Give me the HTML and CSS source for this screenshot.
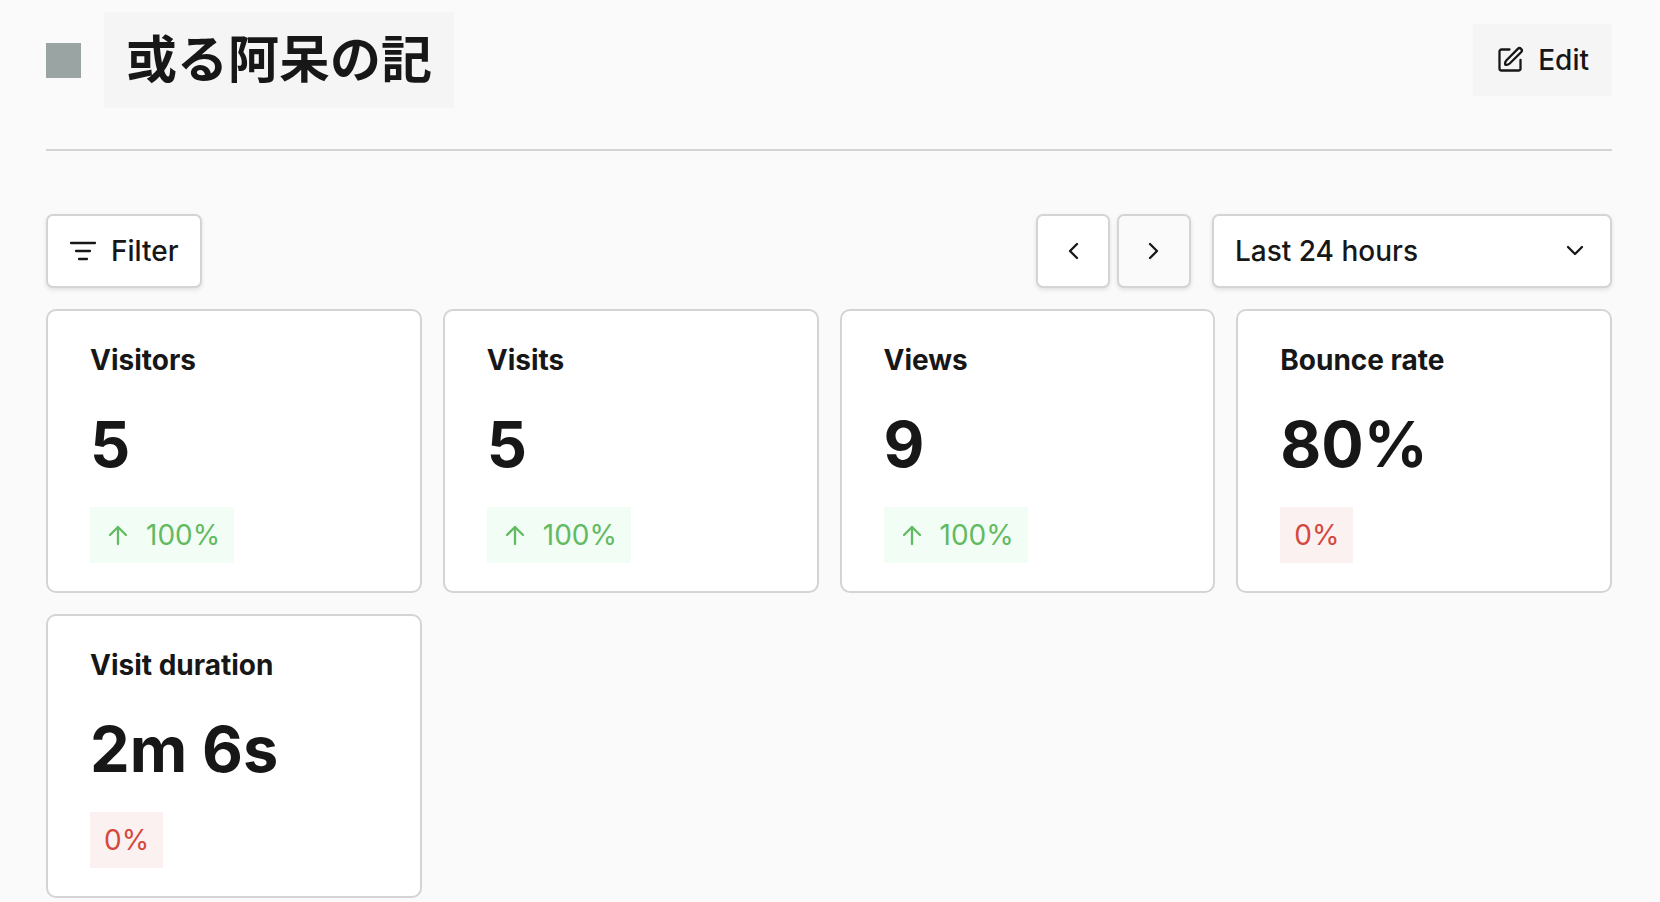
FILE: index.html
```html
<!DOCTYPE html>
<html lang="en">
<head>
  <meta charset="UTF-8" />
  <meta name="viewport" content="width=device-width, initial-scale=1.0"/>
  <title>或る阿呆の記</title>
  <link rel="stylesheet" href="styles.css">
</head>
<body>
  <header class="page-header">
    <span class="site-icon"></span>
    <h1 class="site-name" lang="ja">或る阿呆の記</h1>
    <button type="button" class="edit-btn">
      <svg class="icon" viewBox="0 0 28 28" aria-hidden="true">
        <path d="M13.500 3.500h-8a2 2 0 0 0-2 2v17a2 2 0 0 0 2 2h17a2 2 0 0 0 2-2V14"/>
        <path d="M9.300 18.700c-.5-1.300.2-3.300 1.200-4.400L21.800 2.900a2.300 2.300 0 0 1 3.300 3.300L13.700 17.500c-1.100 1-3.100 1.700-4.400 1.200z"/>
      </svg>
      Edit
    </button>
  </header>

  <main>
    <div class="toolbar">
      <button type="button" class="btn filter-btn">
        <svg class="icon" viewBox="0 0 28 28" aria-hidden="true">
          <path d="M2 6h24M7 14h14M10 22h8"/>
        </svg>
        Filter
      </button>
      <div class="date-controls">
        <div class="date-nav">
          <button type="button" class="btn nav-btn" aria-label="Previous">
            <svg class="icon" viewBox="0 0 28 28" aria-hidden="true"><path d="M18 7l-7 7 7 7"/></svg>
          </button>
          <button type="button" class="btn nav-btn" aria-label="Next" disabled>
            <svg class="icon" viewBox="0 0 28 28" aria-hidden="true"><path d="M10 7l7 7-7 7"/></svg>
          </button>
        </div>
        <div class="date-select">
          <select class="btn" aria-label="Date range">
            <option>Last 24 hours</option>
          </select>
          <svg class="icon" viewBox="0 0 28 28" aria-hidden="true"><path d="M7 10l7 7 7-7"/></svg>
        </div>
      </div>
    </div>

    <div class="metrics">
      <section class="card">
        <h2 class="label">Visitors</h2>
        <div class="value">5</div>
        <div class="change up">
          <svg class="icon" viewBox="0 0 28 28" aria-hidden="true"><path d="M14 23V6M6 14l8-8 8 8"/></svg>
          100%
        </div>
      </section>
      <section class="card">
        <h2 class="label">Visits</h2>
        <div class="value">5</div>
        <div class="change up">
          <svg class="icon" viewBox="0 0 28 28" aria-hidden="true"><path d="M14 23V6M6 14l8-8 8 8"/></svg>
          100%
        </div>
      </section>
      <section class="card">
        <h2 class="label">Views</h2>
        <div class="value">9</div>
        <div class="change up">
          <svg class="icon" viewBox="0 0 28 28" aria-hidden="true"><path d="M14 23V6M6 14l8-8 8 8"/></svg>
          100%
        </div>
      </section>
      <section class="card">
        <h2 class="label">Bounce rate</h2>
        <div class="value">80%</div>
        <div class="change down">0%</div>
      </section>
      <section class="card">
        <h2 class="label">Visit duration</h2>
        <div class="value">2m 6s</div>
        <div class="change down">0%</div>
      </section>
    </div>
  </main>
</body>
</html>
```
FILE: styles.css
```css
* {
  box-sizing: border-box;
  margin: 0;
  padding: 0;
}

body {
  padding: 12px 48px 4px 46px;
  font-family: Inter, "Noto Sans CJK JP", sans-serif;
  font-size: 28px;
  line-height: 42px;
  background: #fafafa;
  color: #171717;
}

button, select {
  font: inherit;
  font-weight: 500;
  color: inherit;
}

.icon {
  flex: none;
  width: 28px;
  height: 28px;
  fill: none;
  stroke: currentColor;
  stroke-width: 2.3;
  stroke-linecap: round;
  stroke-linejoin: round;
}

.page-header {
  display: flex;
  align-items: center;
  padding-bottom: 41px;
  border-bottom: 2px solid #d4d4d4;
}

.site-icon {
  width: 35px;
  height: 35px;
  margin-right: 23px;
  background: #9aa5a3;
}

.site-name {
  padding: 0 22px;
  font-size: 51px;
  line-height: 96px;
  font-weight: 700;
  background: #f5f5f5;
}

.edit-btn {
  display: flex;
  align-items: center;
  gap: 14px;
  height: 72px;
  margin-left: auto;
  padding: 0 23px;
  border: none;
  background: #f5f5f5;
}

.toolbar {
  display: flex;
  justify-content: space-between;
  margin: 63px 0 21px;
}

.btn {
  height: 74px;
  border: 2px solid #d4d4d4;
  border-radius: 7px;
  background: #fff;
  box-shadow: 0 2px 4px rgba(0, 0, 0, 0.1);
}

.filter-btn {
  display: flex;
  align-items: center;
  gap: 14px;
  padding: 0 21px;
}

.date-controls {
  display: flex;
  gap: 21px;
}

.date-nav {
  display: flex;
  gap: 7px;
}

.nav-btn {
  display: flex;
  align-items: center;
  justify-content: center;
  width: 74px;
}

.nav-btn:disabled {
  background: #fafafa;
  color: inherit;
}

.date-select {
  position: relative;
  width: 400px;
}

.date-select select {
  width: 100%;
  padding: 0 21px;
  appearance: none;
}

.date-select .icon {
  position: absolute;
  top: 23px;
  right: 23px;
  pointer-events: none;
}

.metrics {
  display: grid;
  grid-template-columns: repeat(4, 1fr);
  gap: 21px;
}

.card {
  padding: 28px 42px;
  border: 2px solid #d4d4d4;
  border-radius: 10px;
  background: #fff;
}

.label {
  font-size: 28px;
  font-weight: 700;
}

.value {
  margin: 31px 0;
  font-size: 63px;
  line-height: 64px;
  font-weight: 700;
}

.change {
  display: flex;
  align-items: center;
  gap: 14px;
  width: fit-content;
  padding: 7px 14px;
}

.up {
  background: #f2fdf5;
  color: #62ba62;
}

.down {
  background: #fbf1f1;
  color: #d5483e;
}
```
